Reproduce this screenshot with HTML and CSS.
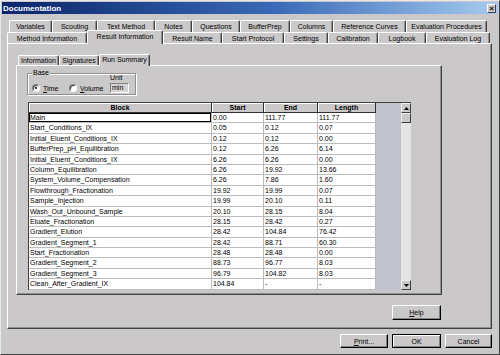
FILE: index.html
```html
<!DOCTYPE html>
<html>
<head>
<meta charset="utf-8">
<link rel="stylesheet" href="styles.css">
</head>
<body>
<div class="window">
  <div class="titlebar">
    <span class="title">Documentation</span>
    <span class="close">×</span>
  </div>
  <div class="tabrow row1">
    <div class="tab">Variables</div>
    <div class="tab">Scouting</div>
    <div class="tab">Text Method</div>
    <div class="tab">Notes</div>
    <div class="tab">Questions</div>
    <div class="tab">BufferPrep</div>
    <div class="tab">Columns</div>
    <div class="tab">Reference Curves</div>
    <div class="tab">Evaluation Procedures</div>
  </div>
  <div class="tabrow row2">
    <div class="tab">Method Information</div>
    <div class="tab sel">Result Information</div>
    <div class="tab">Result Name</div>
    <div class="tab">Start Protocol</div>
    <div class="tab">Settings</div>
    <div class="tab">Calibration</div>
    <div class="tab">Logbook</div>
    <div class="tab">Evaluation Log</div>
  </div>
  <div class="panel">
    <div class="tabrow subtabs">
      <div class="tab">Information</div>
      <div class="tab">Signatures</div>
      <div class="tab sel">Run Summary</div>
    </div>
    <div class="subpanel">
      <div class="group">
        <span class="legend">Base</span>
        <label class="radio r-time"><span class="dot on"></span><span><u>T</u>ime</span></label>
        <label class="radio r-vol"><span class="dot"></span><span><u>V</u>olume</span></label>
        <div class="unit">
          <span class="unit-label">Unit</span>
          <span class="unitbox">min</span>
        </div>
      </div>
      <div class="grid">
        <div class="data">
          <div class="h">Block</div><div class="h">Start</div><div class="h">End</div><div class="h">Length</div>
          <div class="c focus">Main</div><div class="c">0.00</div><div class="c">111.77</div><div class="c">111.77</div>
          <div class="c">Start_Conditions_IX</div><div class="c">0.05</div><div class="c">0.12</div><div class="c">0.07</div>
          <div class="c">Initial_Eluent_Conditions_IX</div><div class="c">0.12</div><div class="c">0.12</div><div class="c">0.00</div>
          <div class="c">BufferPrep_pH_Equilibration</div><div class="c">0.12</div><div class="c">6.26</div><div class="c">6.14</div>
          <div class="c">Initial_Eluent_Conditions_IX</div><div class="c">6.26</div><div class="c">6.26</div><div class="c">0.00</div>
          <div class="c">Column_Equilibration</div><div class="c">6.26</div><div class="c">19.92</div><div class="c">13.66</div>
          <div class="c">System_Volume_Compensation</div><div class="c">6.26</div><div class="c">7.86</div><div class="c">1.60</div>
          <div class="c">Flowthrough_Fractionation</div><div class="c">19.92</div><div class="c">19.99</div><div class="c">0.07</div>
          <div class="c">Sample_Injection</div><div class="c">19.99</div><div class="c">20.10</div><div class="c">0.11</div>
          <div class="c">Wash_Out_Unbound_Sample</div><div class="c">20.10</div><div class="c">28.15</div><div class="c">8.04</div>
          <div class="c">Eluate_Fractionation</div><div class="c">28.15</div><div class="c">28.42</div><div class="c">0.27</div>
          <div class="c">Gradient_Elution</div><div class="c">28.42</div><div class="c">104.84</div><div class="c">76.42</div>
          <div class="c">Gradient_Segment_1</div><div class="c">28.42</div><div class="c">88.71</div><div class="c">60.30</div>
          <div class="c">Start_Fractionation</div><div class="c">28.48</div><div class="c">28.48</div><div class="c">0.00</div>
          <div class="c">Gradient_Segment_2</div><div class="c">88.73</div><div class="c">96.77</div><div class="c">8.03</div>
          <div class="c">Gradient_Segment_3</div><div class="c">96.79</div><div class="c">104.82</div><div class="c">8.03</div>
          <div class="c">Clean_After_Gradient_IX</div><div class="c">104.84</div><div class="c">-</div><div class="c">-</div>
        </div>
        <div class="filler"></div>
        <div class="vscroll">
          <div class="sbtn"><svg width="5" height="3" viewBox="0 0 5 3"><path d="M2.5 0L5 3H0z"/></svg></div>
          <div class="sbtn thumb"></div>
          <div class="track"></div>
          <div class="sbtn"><svg width="5" height="3" viewBox="0 0 5 3"><path d="M0 0H5L2.5 3z"/></svg></div>
        </div>
      </div>
    </div>
    <div class="helprow">
      <button class="btn help"><u>H</u>elp</button>
    </div>
  </div>
  <div class="buttons">
    <button class="btn print"><u>P</u>rint...</button>
    <button class="btn ok default">OK</button>
    <button class="btn cancel">Cancel</button>
  </div>
</div>
</body>
</html>
```
FILE: styles.css
```css
* { box-sizing: border-box; }
html, body { margin: 0; padding: 0; }
body {
  width: 500px;
  height: 355px;
  overflow: hidden;
  background: #cac8c8;
  font-family: "Liberation Sans", Arial, sans-serif;
  font-size: 7px;
  color: #000;
}
.window {
  width: 500px;
  height: 355px;
  border: 1px solid;
  border-color: #e8e8e8 #404040 #404040 #e8e8e8;
  padding: 1px;
  display: flex;
  flex-direction: column;
  background: #cac8c8;
}
.titlebar {
  height: 12px;
  flex: none;
  display: flex;
  align-items: center;
  justify-content: space-between;
  background: linear-gradient(to right, #0a246a, #3a6ab8 55%, #a6caf0);
  padding: 0 2px 0 1px;
}
.title {
  color: #fff;
  font-weight: bold;
  font-size: 8px;
}
.close {
  width: 9px;
  height: 9px;
  background: #cac8c8;
  border: 1px solid;
  border-color: #fff #404040 #404040 #fff;
  font-size: 8px;
  line-height: 7px;
  text-align: center;
  font-weight: bold;
}
.tabrow {
  display: flex;
  align-items: flex-end;
  flex: none;
}
.tab {
  height: 100%;
  border-top: 1px solid #fff;
  border-left: 1px solid #fff;
  border-right: 1px solid #404040;
  box-shadow: inset -1px 0 #909090;
  border-radius: 2px 2px 0 0;
  text-align: center;
  white-space: nowrap;
  overflow: hidden;
  background: #cac8c8;
}
.row1 { margin-top: 6px; height: 12px; padding-left: 7px; }
.row1 .tab { line-height: 11px; }
.row1 .tab:nth-child(1) { width: 43px; }
.row1 .tab:nth-child(2) { width: 45px; }
.row1 .tab:nth-child(3) { width: 58px; }
.row1 .tab:nth-child(4) { width: 37px; }
.row1 .tab:nth-child(5) { width: 48px; }
.row1 .tab:nth-child(6) { width: 50px; }
.row1 .tab:nth-child(7) { width: 43px; }
.row1 .tab:nth-child(8) { width: 73px; }
.row1 .tab:nth-child(9) { width: 81px; }

.row2 { height: 11px; padding-left: 5px; }
.row2 .tab { line-height: 11px; }
.row2 .tab:nth-child(1) { width: 80px; }
.row2 .tab:nth-child(2) { width: 76px; }
.row2 .tab:nth-child(3) { width: 59px; }
.row2 .tab:nth-child(4) { width: 62px; }
.row2 .tab:nth-child(5) { width: 44px; }
.row2 .tab:nth-child(6) { width: 50px; }
.row2 .tab:nth-child(7) { width: 48px; }
.row2 .tab:nth-child(8) { width: 64px; }

.tab.sel {
  position: relative;
  z-index: 1;
  height: 14px;
  margin-bottom: -1px;
  line-height: 11px;
}
.panel {
  margin-left: 5px;
  width: 485px;
  height: 286px;
  flex: none;
  border: 1px solid;
  border-color: #fff #404040 #404040 #fff;
  box-shadow: inset -1px -1px #909090;
  padding: 11px 0 0 8px;
  display: flex;
  flex-direction: column;
}
.subtabs { height: 10px; padding-left: 2px; }
.subtabs .tab { line-height: 10px; }
.subtabs .tab:nth-child(1) { width: 41px; }
.subtabs .tab:nth-child(2) { width: 40px; }
.subtabs .tab:nth-child(3) { width: 51px; }
.subtabs .tab.sel { height: 12px; line-height: 10px; }

.subpanel {
  width: 426px;
  height: 230px;
  flex: none;
  border: 1px solid;
  border-color: #fff #404040 #404040 #fff;
  box-shadow: inset -1px -1px #909090;
  padding: 7px 0 0 10px;
}
.group {
  position: relative;
  width: 109px;
  height: 22px;
  border: 1px solid #909090;
  box-shadow: inset 1px 1px #fff, 1px 1px #fff;
  display: flex;
  align-items: flex-end;
  padding: 0 0 1px 4px;
}
.legend {
  position: absolute;
  left: 4px;
  top: -5px;
  padding: 0 1px;
  background: #cac8c8;
  line-height: 8px;
}
.radio {
  display: flex;
  align-items: center;
  gap: 3px;
  height: 10px;
  flex: none;
}
.r-time { width: 37px; }
.r-vol { width: 41px; }
.dot {
  position: relative;
  width: 8px;
  height: 8px;
  border-radius: 50%;
  background: #fff;
  border: 1px solid;
  border-color: #808080 #fff #fff #808080;
  box-shadow: inset 1px 1px #404040;
  flex: none;
}
.dot.on::after {
  content: "";
  position: absolute;
  left: 2px;
  top: 2px;
  width: 2px;
  height: 2px;
  border-radius: 50%;
  background: #000;
}
.unit {
  display: flex;
  flex-direction: column;
  width: 19px;
}
.unit-label { line-height: 8px; }
.unitbox {
  margin-top: 1px;
  height: 10px;
  border: 1px solid;
  border-color: #808080 #fff #fff #808080;
  line-height: 8px;
  padding-left: 1px;
  background: #d4d2d2;
}
.grid {
  margin: 7px 0 0 1px;
  width: 383px;
  height: 188px;
  display: flex;
  border-top: 1px solid #404040;
  border-left: 1px solid #404040;
}
.data {
  display: grid;
  grid-template-columns: 183px 52px 54px 58px;
  grid-template-rows: 10px;
  grid-auto-rows: 10.4px;
  align-content: start;
}
.h {
  background: #cac8c8;
  font-weight: bold;
  text-align: center;
  border-right: 1px solid #303030;
  border-bottom: 1px solid #303030;
  box-shadow: inset 1px 1px #fff;
  line-height: 9px;
}
.c {
  background: #fff;
  border-right: 1px solid #bcbcbc;
  border-bottom: 1px solid #bcbcbc;
  padding-left: 1px;
  line-height: 9.4px;
  white-space: nowrap;
  overflow: hidden;
}
.c.focus { box-shadow: inset 0 0 0 1px #000; }
.filler {
  width: 25px;
  background: #c2c2cc;
}
.vscroll {
  width: 10px;
  display: flex;
  flex-direction: column;
  background: #e4e4e4;
}
.sbtn {
  height: 10px;
  flex: none;
  background: #cac8c8;
  border: 1px solid;
  border-color: #f0f0f0 #404040 #404040 #f0f0f0;
  display: flex;
  align-items: center;
  justify-content: center;
}
.track { flex: 1; }
.helprow {
  margin-top: 10px;
  width: 426px;
  display: flex;
  justify-content: flex-end;
}
.btn {
  font-family: "Liberation Sans", Arial, sans-serif;
  font-size: 7px;
  color: #000;
  padding: 0;
  height: 14px;
  background: #cac8c8;
  border: 1px solid;
  border-color: #fff #000 #000 #fff;
  box-shadow: inset -1px -1px #808080;
}
.help { width: 49px; height: 15px; margin-right: 1px; }
.buttons {
  margin-top: 5px;
  height: 14px;
  display: flex;
  justify-content: flex-end;
  gap: 4px;
  padding-right: 6px;
}
.print { width: 48px; }
.ok { width: 49px; }
.cancel { width: 47px; }
.btn.default {
  border-color: #000;
  box-shadow: inset 1px 1px #fff, inset -1px -1px #808080;
}
```
